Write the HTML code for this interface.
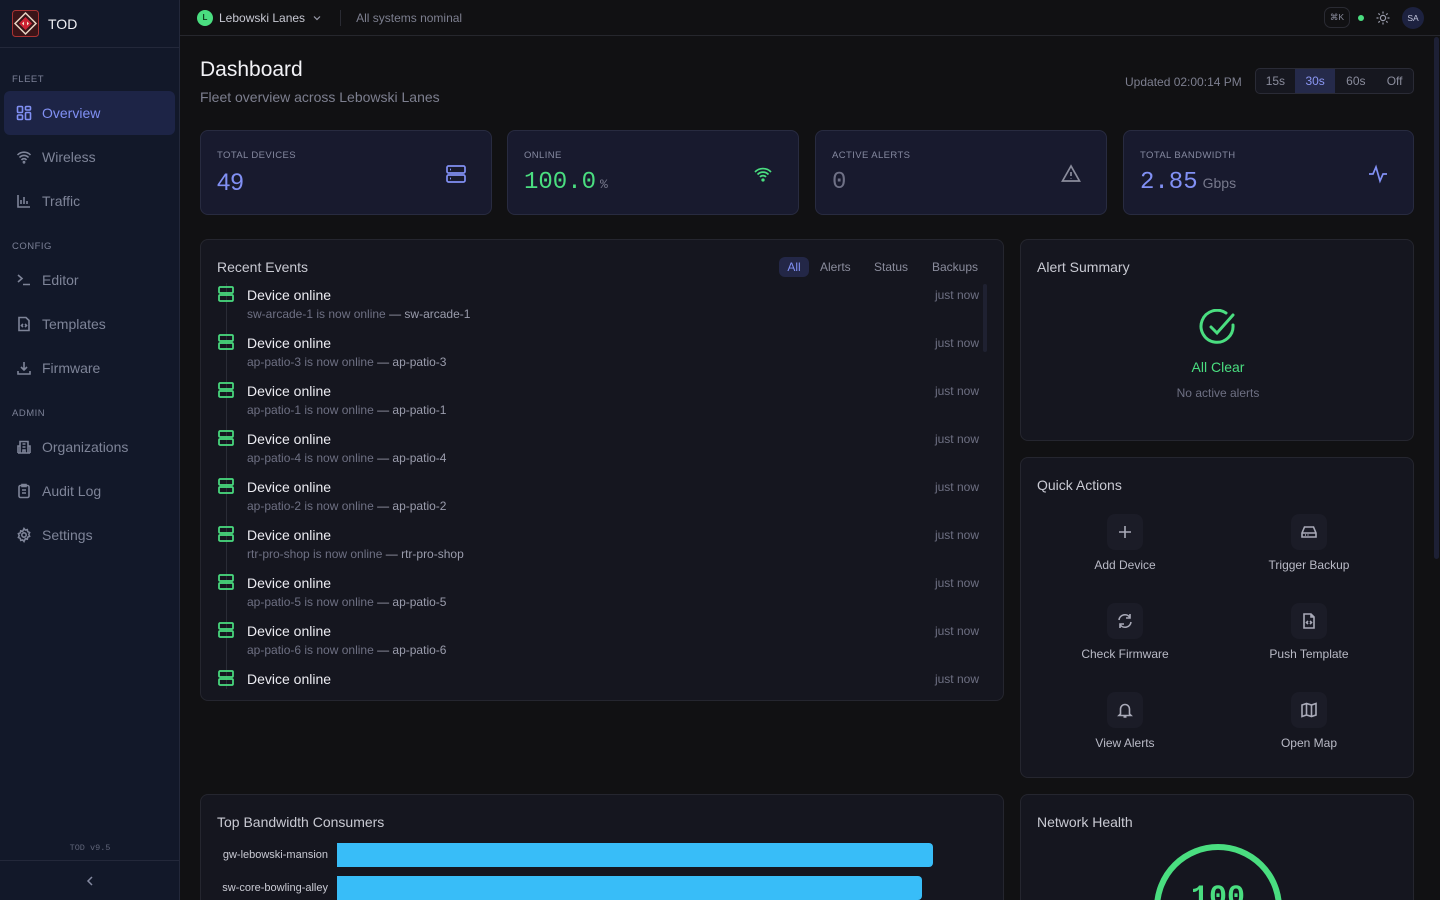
<!DOCTYPE html>
<html style="overflow:hidden;height:900px"><head><meta charset="utf-8"><style>
*{box-sizing:border-box;margin:0;padding:0}
body{width:1440px;height:900px;overflow:hidden;background:#111113;font-family:"Liberation Sans",sans-serif;color:#e4e4ea;position:relative}
.sb{position:absolute;left:0;top:0;width:180px;height:900px;background:#121829;border-right:1px solid #23283a}
.logo{height:48px;border-bottom:1px solid #23283a;display:flex;align-items:center;padding-left:12px;gap:9px;font-size:14px;color:#f0f0f4}
.sec{font-size:9.5px;letter-spacing:.5px;color:#7b8096;padding-left:12px;position:absolute}
.ni{position:absolute;left:4px;width:171px;height:44px;border-radius:6px;display:flex;align-items:center;padding-left:12px;gap:10px;font-size:14px;color:#7e8498}
.ni svg{width:16px;height:16px;stroke:#7e8498;fill:none;stroke-width:1.6}
.ni.on{background:#1d2446;color:#8190f4}
.ni.on svg{stroke:#8190f4}
.hdr{position:absolute;left:180px;top:0;right:0;height:36px;border-bottom:1px solid #26272d;display:flex;align-items:center;font-size:12px}
.card{position:absolute;background:#15161f;border:1px solid #25262f;border-radius:8px;overflow:hidden}
.stat{background:#181a2e;border-color:#282b40}
.lbl{position:absolute;left:16px;top:19px;font-size:9.5px;letter-spacing:.4px;color:#8589a0}
.val{position:absolute;left:16px;top:38px;font-family:"Liberation Mono",monospace;font-size:24px}
.sic{position:absolute;right:24px;top:32px;width:22px;height:22px;fill:none;stroke-width:1.7}
.ct{position:absolute;left:16px;top:19px;font-size:14px;color:#c9cad3}
.ev{position:absolute;left:46px;font-size:14px;color:#ececf2}
.ev small{display:block;font-size:12px;color:#6e7083;margin-top:4px}
.ev small b{font-weight:normal;color:#9a9cac}
.tm{position:absolute;right:12px;font-size:12px;color:#6e7083}
.evi{position:absolute;left:16px;width:18px;height:18px;fill:none;stroke:#4ade80;stroke-width:1.7}
.qa{position:absolute;width:160px;text-align:center;font-size:12px;color:#b9bac6}
.qa .b{width:36px;height:36px;border-radius:8px;background:#1b1c27;margin:0 auto 8px;display:flex;align-items:center;justify-content:center}
.qa svg{width:18px;height:18px;fill:none;stroke:#a9aab8;stroke-width:1.6}
</style></head><body>
<div class="sb">
 <div class="logo"><svg width="27" height="27" viewBox="0 0 27 27"><rect x="0.5" y="0.5" width="26" height="26" rx="3" fill="#3a1418" stroke="#a33" /><path d="M13.5 3 L24 13.5 L13.5 24 L3 13.5Z" fill="none" stroke="#e8d6c4" stroke-width="1.5"/><path d="M13.5 7 L20 13.5 L13.5 20 L7 13.5Z" fill="#c23" /><path d="M10 13.5 L12 11.5 V15.5Z M17 13.5 L15 11.5 V15.5Z" fill="#f4e4d0"/></svg>TOD</div>
 <div class="sec" style="top:74px">FLEET</div>
 <div class="ni on" style="top:91px"><svg viewBox="0 0 16 16"><rect x="1.5" y="1.5" width="5" height="6" rx="1"/><rect x="9.5" y="1.5" width="5" height="3.5" rx="1"/><rect x="1.5" y="10" width="5" height="4.5" rx="1"/><rect x="9.5" y="7.5" width="5" height="7" rx="1"/></svg>Overview</div>
 <div class="ni" style="top:135px"><svg viewBox="0 0 16 16"><path d="M1.5 6a9 9 0 0 1 13 0M3.5 8.5a6 6 0 0 1 9 0M5.5 11a3 3 0 0 1 5 0"/><circle cx="8" cy="13.2" r=".6"/></svg>Wireless</div>
 <div class="ni" style="top:179px"><svg viewBox="0 0 16 16"><path d="M2 2v12h12M5 11V7M8 11V4M11 11V8"/></svg>Traffic</div>
 <div class="sec" style="top:241px">CONFIG</div>
 <div class="ni" style="top:258px"><svg viewBox="0 0 16 16"><path d="M2 3l4 3.5L2 10M7 12.5h7"/></svg>Editor</div>
 <div class="ni" style="top:302px"><svg viewBox="0 0 16 16"><path d="M3 1.5h7l3 3V14.5H3Z"/><path d="M7 8l-1.5 1.5L7 11M9 8l1.5 1.5L9 11"/></svg>Templates</div>
 <div class="ni" style="top:346px"><svg viewBox="0 0 16 16"><path d="M8 2v8M5 7l3 3 3-3M2 11v3h12v-3"/></svg>Firmware</div>
 <div class="sec" style="top:408px">ADMIN</div>
 <div class="ni" style="top:425px"><svg viewBox="0 0 16 16"><path d="M4 14V2.5h8V14M2 14h12M2 14V7h2M12 7h2v7M6.5 5h3M6.5 8h3M7 14v-3h2v3"/></svg>Organizations</div>
 <div class="ni" style="top:469px"><svg viewBox="0 0 16 16"><rect x="3" y="2.5" width="10" height="12" rx="1.5"/><path d="M6 1.5h4v2H6zM6 7h4M6 10h4"/></svg>Audit Log</div>
 <div class="ni" style="top:513px"><svg viewBox="0 0 16 16"><circle cx="8" cy="8" r="2.2"/><path d="M8 1.5l1.3 1.6 2-.5.4 2 1.9.9-.8 1.9.8 1.9-1.9.9-.4 2-2-.5L8 14.5l-1.3-1.6-2 .5-.4-2-1.9-.9.8-1.9-.8-1.9 1.9-.9.4-2 2 .5Z"/></svg>Settings</div>
 <div style="position:absolute;top:843px;width:180px;text-align:center;font-family:'Liberation Mono',monospace;font-size:8.5px;color:#5f6478">TOD v9.5</div>
 <div style="position:absolute;top:860px;left:0;width:179px;border-top:1px solid #23283a;height:40px;display:flex;align-items:center;justify-content:center"><svg width="10" height="12" viewBox="0 0 10 12"><path d="M7 2L3 6l4 4" fill="none" stroke="#8489a0" stroke-width="1.5"/></svg></div>
</div>

<div class="hdr">
 <div style="margin-left:17px;width:16px;height:16px;border-radius:50%;background:#4ade80;color:#0d3b1c;font-size:8px;font-weight:bold;display:flex;align-items:center;justify-content:center">L</div>
 <span style="margin-left:6px;color:#c7c8d2">Lebowski Lanes</span>
 <svg style="margin-left:8px" width="8" height="6" viewBox="0 0 8 6"><path d="M1 1.5l3 3 3-3" fill="none" stroke="#9a9cab" stroke-width="1.2"/></svg>
 <div style="margin-left:19px;width:1px;height:16px;background:#2a2b33"></div>
 <span style="margin-left:15px;color:#7d7f8f">All systems nominal</span>
 <div style="position:absolute;left:1144px;top:7px;width:26px;height:21px;border:1px solid #2a2b33;border-radius:7px;font-size:8.5px;color:#8a8c9c;display:flex;align-items:center;justify-content:center">⌘K</div>
 <div style="position:absolute;left:1178px;top:15px;width:6px;height:6px;border-radius:50%;background:#4ade80"></div>
 <svg style="position:absolute;left:1196px;top:11px" width="14" height="14" viewBox="0 0 14 14" fill="none" stroke="#9a9cab" stroke-width="1.2"><circle cx="7" cy="7" r="2.6"/><path d="M7 .5v2M7 11.5v2M.5 7h2M11.5 7h2M2.4 2.4l1.4 1.4M10.2 10.2l1.4 1.4M2.4 11.6l1.4-1.4M10.2 3.8l1.4-1.4"/></svg>
 <div style="position:absolute;left:1222px;top:7px;width:22px;height:22px;border-radius:50%;background:#1d2240;font-size:8.5px;color:#c3c6dc;display:flex;align-items:center;justify-content:center">SA</div>
</div>
<div style="position:absolute;left:1434px;top:37px;width:5px;height:522px;background:#1d2035;border-radius:3px"></div>

<div style="position:absolute;left:200px;top:58px;font-size:21px;color:#f2f2f6">Dashboard</div>
<div style="position:absolute;left:200px;top:89px;font-size:14px;color:#7d7f8f">Fleet overview across Lebowski Lanes</div>
<div style="position:absolute;left:1125px;top:75px;font-size:12px;color:#7d7f8f">Updated 02:00:14 PM</div>
<div style="position:absolute;left:1255px;top:68px;width:159px;height:26px;border:1px solid #2a2b36;border-radius:5px;background:#16171f;display:flex;font-size:12px;color:#8a8c9c">
 <div style="width:39px;text-align:center;line-height:24px">15s</div>
 <div style="width:41px;text-align:center;line-height:24px;background:#252a4a;color:#8b97f4">30s</div>
 <div style="width:41px;text-align:center;line-height:24px">60s</div>
 <div style="width:37px;text-align:center;line-height:24px">Off</div>
</div>

<div class="card stat" style="left:200px;top:130px;width:292px;height:85px"><div class="lbl">TOTAL DEVICES</div><div class="val" style="color:#8190f4;font-family:'Liberation Sans',sans-serif">49</div><svg class="sic" viewBox="0 0 22 22" stroke="#8190f4"><rect x="2" y="3" width="18" height="7" rx="1.5"/><rect x="2" y="12" width="18" height="7" rx="1.5"/><path d="M5 6.5h1M5 15.5h1"/></svg></div>
<div class="card stat" style="left:507px;top:130px;width:292px;height:85px"><div class="lbl">ONLINE</div><div class="val" style="color:#4ade80">100.0<span style="font-size:13px;color:#77798c;margin-left:4px">%</span></div><svg class="sic" viewBox="0 0 22 22" stroke="#4ade80"><path d="M3 9a11 11 0 0 1 16 0M5.5 11.5a7.5 7.5 0 0 1 11 0M8 14a4 4 0 0 1 6 0"/><circle cx="11" cy="17" r=".8"/></svg></div>
<div class="card stat" style="left:815px;top:130px;width:292px;height:85px"><div class="lbl">ACTIVE ALERTS</div><div class="val" style="color:#6f7186">0</div><svg class="sic" viewBox="0 0 22 22" stroke="#8a8c9c"><path d="M11 3L2.5 18h17Z"/><path d="M11 9v4M11 15.5v.5"/></svg></div>
<div class="card stat" style="left:1123px;top:130px;width:291px;height:85px"><div class="lbl">TOTAL BANDWIDTH</div><div class="val" style="color:#8190f4">2.85<span style="font-family:'Liberation Sans',sans-serif;font-size:14px;color:#77798c;margin-left:5px">Gbps</span></div><svg class="sic" viewBox="0 0 22 22" stroke="#8190f4"><path d="M2 11h4l3-7 4 14 3-7h4"/></svg></div>

<div class="card" style="left:200px;top:239px;width:804px;height:462px">
 <div class="ct">Recent Events</div>
 <div style="position:absolute;left:578px;top:17px;width:30px;height:20px;border-radius:6px;background:#232747;color:#8190f4;font-size:12px;text-align:center;line-height:20px">All</div>
 <div style="position:absolute;left:619px;top:20px;font-size:12px;color:#8a8c9c">Alerts</div>
 <div style="position:absolute;left:673px;top:20px;font-size:12px;color:#8a8c9c">Status</div>
 <div style="position:absolute;left:731px;top:20px;font-size:12px;color:#8a8c9c">Backups</div>
 <div style="position:absolute;left:782px;top:44px;width:4px;height:68px;border-radius:2px;background:#1f2131"></div>
 <div style="position:absolute;left:0;top:43px;width:790px;height:406px;overflow:hidden">
  <div style="position:absolute;left:25px;top:0;width:1px;height:420px;background:#2a2c36"></div>
  <svg class="evi" style="top:2px" viewBox="0 0 18 18"><rect x="2" y="2" width="14" height="6" rx="1"/><rect x="2" y="10" width="14" height="6" rx="1"/></svg><div class="ev" style="top:4px">Device online<small>sw-arcade-1 is now online <b>— sw-arcade-1</b></small></div><div class="tm" style="top:5px">just now</div>
  <svg class="evi" style="top:50px" viewBox="0 0 18 18"><rect x="2" y="2" width="14" height="6" rx="1"/><rect x="2" y="10" width="14" height="6" rx="1"/></svg><div class="ev" style="top:52px">Device online<small>ap-patio-3 is now online <b>— ap-patio-3</b></small></div><div class="tm" style="top:53px">just now</div>
  <svg class="evi" style="top:98px" viewBox="0 0 18 18"><rect x="2" y="2" width="14" height="6" rx="1"/><rect x="2" y="10" width="14" height="6" rx="1"/></svg><div class="ev" style="top:100px">Device online<small>ap-patio-1 is now online <b>— ap-patio-1</b></small></div><div class="tm" style="top:101px">just now</div>
  <svg class="evi" style="top:146px" viewBox="0 0 18 18"><rect x="2" y="2" width="14" height="6" rx="1"/><rect x="2" y="10" width="14" height="6" rx="1"/></svg><div class="ev" style="top:148px">Device online<small>ap-patio-4 is now online <b>— ap-patio-4</b></small></div><div class="tm" style="top:149px">just now</div>
  <svg class="evi" style="top:194px" viewBox="0 0 18 18"><rect x="2" y="2" width="14" height="6" rx="1"/><rect x="2" y="10" width="14" height="6" rx="1"/></svg><div class="ev" style="top:196px">Device online<small>ap-patio-2 is now online <b>— ap-patio-2</b></small></div><div class="tm" style="top:197px">just now</div>
  <svg class="evi" style="top:242px" viewBox="0 0 18 18"><rect x="2" y="2" width="14" height="6" rx="1"/><rect x="2" y="10" width="14" height="6" rx="1"/></svg><div class="ev" style="top:244px">Device online<small>rtr-pro-shop is now online <b>— rtr-pro-shop</b></small></div><div class="tm" style="top:245px">just now</div>
  <svg class="evi" style="top:290px" viewBox="0 0 18 18"><rect x="2" y="2" width="14" height="6" rx="1"/><rect x="2" y="10" width="14" height="6" rx="1"/></svg><div class="ev" style="top:292px">Device online<small>ap-patio-5 is now online <b>— ap-patio-5</b></small></div><div class="tm" style="top:293px">just now</div>
  <svg class="evi" style="top:338px" viewBox="0 0 18 18"><rect x="2" y="2" width="14" height="6" rx="1"/><rect x="2" y="10" width="14" height="6" rx="1"/></svg><div class="ev" style="top:340px">Device online<small>ap-patio-6 is now online <b>— ap-patio-6</b></small></div><div class="tm" style="top:341px">just now</div>
  <svg class="evi" style="top:386px" viewBox="0 0 18 18"><rect x="2" y="2" width="14" height="6" rx="1"/><rect x="2" y="10" width="14" height="6" rx="1"/></svg><div class="ev" style="top:388px">Device online</div><div class="tm" style="top:389px">just now</div>
 </div>
</div>

<div class="card" style="left:1020px;top:239px;width:394px;height:202px">
 <div class="ct">Alert Summary</div>
 <svg style="position:absolute;left:178px;top:69px" width="38" height="38" viewBox="0 0 38 38" fill="none" stroke="#4ade80" stroke-width="3" stroke-linecap="round"><path d="M34 16a16 16 0 1 1-7-12"/><path d="M12 18l6 6L34 6"/></svg>
 <div style="position:absolute;left:0;width:394px;top:119px;text-align:center;font-size:14px;color:#4ade80">All Clear</div>
 <div style="position:absolute;left:0;width:394px;top:146px;text-align:center;font-size:12px;color:#6e7083">No active alerts</div>
</div>

<div class="card" style="left:1020px;top:457px;width:394px;height:321px">
 <div class="ct">Quick Actions</div>
 <div class="qa" style="left:24px;top:56px"><div class="b"><svg viewBox="0 0 18 18"><path d="M9 3v12M3 9h12"/></svg></div>Add Device</div>
 <div class="qa" style="left:208px;top:56px"><div class="b"><svg viewBox="0 0 18 18"><path d="M2 10l2.5-6h9L16 10v4H2Z M2 10h14"/><path d="M5 12h1M7.5 12h1"/></svg></div>Trigger Backup</div>
 <div class="qa" style="left:24px;top:145px"><div class="b"><svg viewBox="0 0 18 18"><path d="M3 8a6 6 0 0 1 11-2.5M15 10a6 6 0 0 1-11 2.5M14 2v4h-4M4 16v-4h4"/></svg></div>Check Firmware</div>
 <div class="qa" style="left:208px;top:145px"><div class="b"><svg viewBox="0 0 18 18"><path d="M4 2h7l3 3v11H4Z M11 2v3h3"/><path d="M8 9l-1.5 1.5L8 12M10 9l1.5 1.5L10 12"/></svg></div>Push Template</div>
 <div class="qa" style="left:24px;top:234px"><div class="b"><svg viewBox="0 0 18 18"><path d="M4.5 13V8a4.5 4.5 0 0 1 9 0v5l1.5 1.5H3Z M7.5 16h3"/></svg></div>View Alerts</div>
 <div class="qa" style="left:208px;top:234px"><div class="b"><svg viewBox="0 0 18 18"><path d="M2 4l4.5-1.5 5 1.5L16 2.5V14l-4.5 1.5-5-1.5L2 15.5Z M6.5 2.5v11.5M11.5 4v11.5"/></svg></div>Open Map</div>
</div>

<div class="card" style="left:200px;top:794px;width:804px;height:106px;border-bottom:none;border-radius:8px 8px 0 0">
 <div class="ct">Top Bandwidth Consumers</div>
 <div style="position:absolute;right:675px;top:54px;font-size:11px;color:#c9cad3">gw-lebowski-mansion</div>
 <div style="position:absolute;left:136px;top:48px;width:596px;height:24px;background:#38bdf8;border-radius:0 4px 4px 0"></div>
 <div style="position:absolute;right:675px;top:87px;font-size:11px;color:#c9cad3">sw-core-bowling-alley</div>
 <div style="position:absolute;left:136px;top:81px;width:585px;height:24px;background:#38bdf8;border-radius:0 4px 4px 0"></div>
</div>
<div class="card" style="left:1020px;top:794px;width:394px;height:106px;border-bottom:none;border-radius:8px 8px 0 0">
 <div class="ct">Network Health</div>
 <svg style="position:absolute;left:132px;top:48px" width="130" height="80" viewBox="0 0 130 80"><circle cx="65" cy="65" r="61" fill="none" stroke="#4ade80" stroke-width="6"/><text x="65" y="62" text-anchor="middle" font-family="Liberation Mono,monospace" font-weight="bold" font-size="30" fill="#4ade80">100</text></svg>
</div>
</body></html>
